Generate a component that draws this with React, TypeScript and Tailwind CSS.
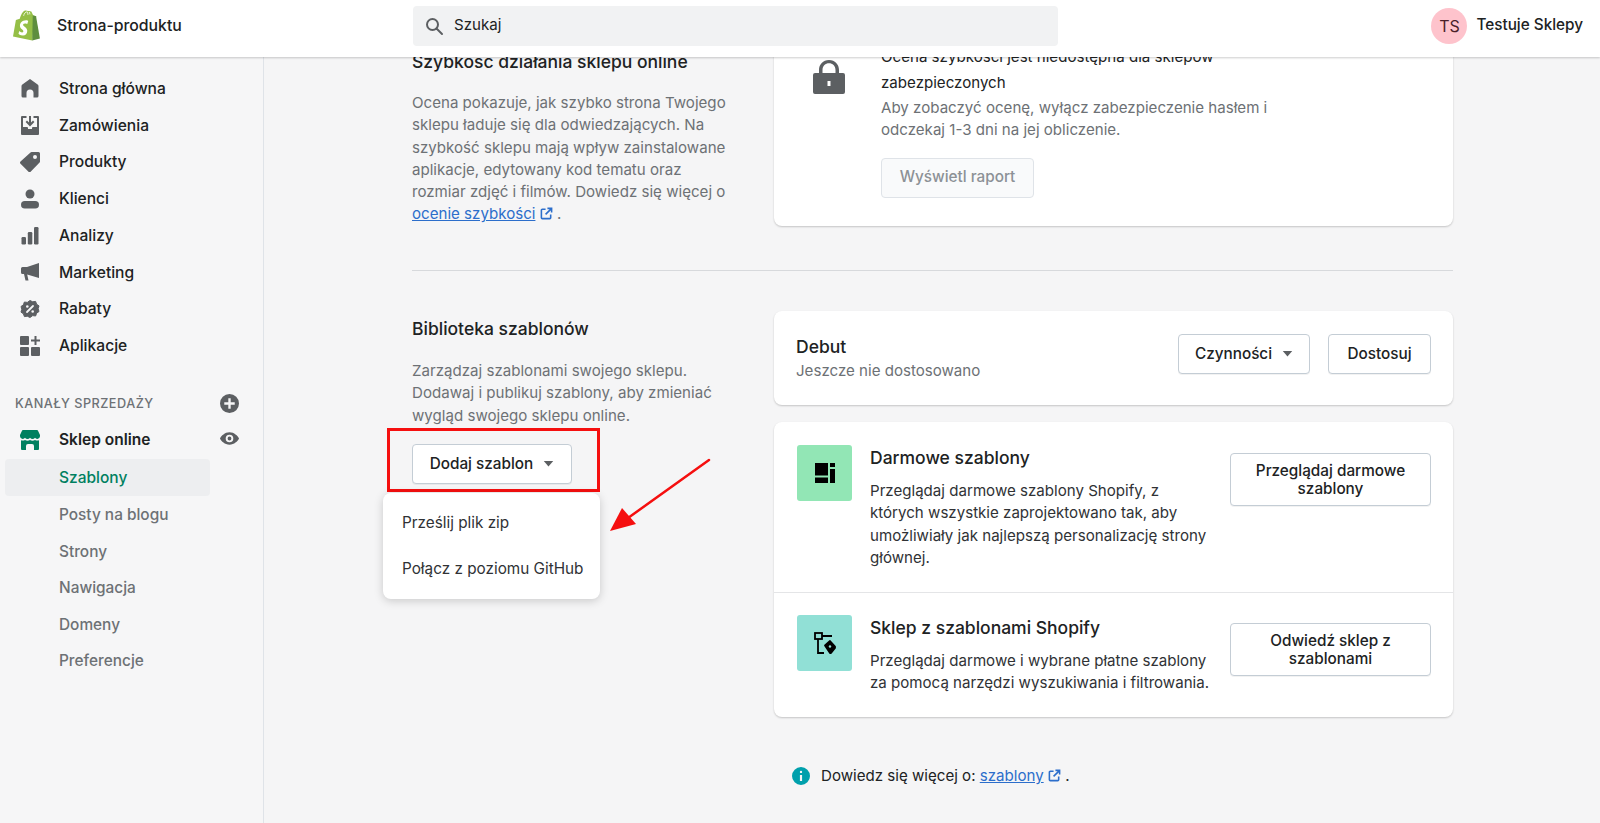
import React from "react";

const navItems = [
  { label: "Strona główna", icon: <HomeIcon /> },
  { label: "Zamówienia", icon: <OrdersIcon /> },
  { label: "Produkty", icon: <TagIcon /> },
  { label: "Klienci", icon: <CustomerIcon /> },
  { label: "Analizy", icon: <AnalyticsIcon /> },
  { label: "Marketing", icon: <MarketingIcon /> },
  { label: "Rabaty", icon: <DiscountIcon /> },
  { label: "Aplikacje", icon: <AppsIcon /> },
];

const subItems = ["Posty na blogu", "Strony", "Nawigacja", "Domeny", "Preferencje"];

function HomeIcon() {
  return (
    <svg viewBox="0 0 20 20" className="w-5 h-5" fill="#5c5f62">
      <path d="M10 1 2.700 6.200A2 2 0 0 0 1.500 8v10A1.500 1.500 0 0 0 3 19.500h3.500V15a3.500 3.500 0 0 1 7 0v4.500H17a1.500 1.500 0 0 0 1.500-1.500V8a2 2 0 0 0-1.200-1.800z" />
    </svg>
  );
}

function OrdersIcon() {
  return (
    <svg viewBox="0 0 20 20" className="w-5 h-5" fill="#5c5f62">
      <path d="M1 2a1 1 0 0 1 1-1h4.500v2H3v9h4a1 1 0 0 1 1 1v1h4v-1a1 1 0 0 1 1-1h4V3h-3.500V1H18a1 1 0 0 1 1 1v17a1 1 0 0 1-1 1H2a1 1 0 0 1-1-1z" />
      <path d="M9 1h2v6.600l2-2 1.400 1.400-4.400 4.400L5.600 7 7 5.600l2 2z" />
    </svg>
  );
}

function TagIcon() {
  return (
    <svg viewBox="0 0 20 20" className="w-5 h-5" fill="#5c5f62">
      <path
        fillRule="evenodd"
        d="M18.500 0h-7a1.500 1.500 0 0 0-1 .4L.5 9.600a1.500 1.500 0 0 0 0 2.100l8 8a1.500 1.500 0 0 0 2.100 0l9-9.300a1.500 1.500 0 0 0 .4-1V1.500A1.500 1.500 0 0 0 18.500 0zM15 7a2 2 0 1 1 0-4 2 2 0 0 1 0 4z"
      />
    </svg>
  );
}

function CustomerIcon() {
  return (
    <svg viewBox="0 0 20 20" className="w-5 h-5" fill="#5c5f62">
      <circle cx="10" cy="5" r="4.500" />
      <rect x="1" y="12" width="18" height="7.500" rx="3.750" />
    </svg>
  );
}

function AnalyticsIcon() {
  return (
    <svg viewBox="0 0 20 20" className="w-5 h-5" fill="#5c5f62">
      <rect x="1.500" y="11" width="4.500" height="7.500" rx="1.200" />
      <rect x="7.800" y="6" width="4.500" height="12.500" rx="1.200" />
      <rect x="14" y="1" width="4.500" height="17.500" rx="1.200" />
    </svg>
  );
}

function MarketingIcon() {
  return (
    <svg viewBox="0 0 20 20" className="w-5 h-5" fill="#5c5f62">
      <path d="M19 1 7 5H2.500A1.500 1.500 0 0 0 1 6.500v4A1.500 1.500 0 0 0 2.500 12H4l1.500 6.500h3L7.200 12.500 19 16z" />
    </svg>
  );
}

function DiscountIcon() {
  return (
    <svg viewBox="0 0 20 20" className="w-[22px] h-[22px]">
      <path
        d="M10 1.500l2.700 1.300 2.900-.4 1 2.800 2.400 1.700-.8 2.800.8 2.800-2.400 1.700-1 2.800-2.900-.4L10 18.500l-2.700-1.300-2.900.4-1-2.800L1 13.100l.8-2.800L1 7.500l2.400-1.700 1-2.800 2.900.4z"
        fill="#5c5f62"
        stroke="#5c5f62"
        strokeWidth="1"
        strokeLinejoin="round"
      />
      <path d="M7 13l6-6" stroke="#f6f6f7" strokeWidth="1.800" strokeLinecap="round" />
      <circle cx="7.300" cy="7.500" r="1.300" fill="#f6f6f7" />
      <circle cx="12.700" cy="12.500" r="1.300" fill="#f6f6f7" />
    </svg>
  );
}

function AppsIcon() {
  return (
    <svg viewBox="0 0 20 20" className="w-5 h-5" fill="#5c5f62">
      <rect x="0" y="0" width="9" height="9" rx="1" />
      <rect x="0" y="11" width="9" height="9" rx="1" />
      <rect x="11" y="11" width="9" height="9" rx="1" />
      <path d="M14.500 0h2v3.500H20v2h-3.500V9h-2V5.500H11v-2h3.500z" />
    </svg>
  );
}

function StoreIcon() {
  return (
    <svg viewBox="0 0 20 20" className="w-5 h-5" fill="#008060">
      <path d="M3 0h14a1 1 0 0 1 .9.500L20 5v1.200a2.800 2.800 0 0 1-5 1.600 3.200 3.200 0 0 1-5 0 3.200 3.200 0 0 1-5 0 2.800 2.800 0 0 1-5-1.600V5L2.100.5A1 1 0 0 1 3 0z" />
      <path d="M1 10.300a4.500 4.500 0 0 0 4-.4 4.800 4.800 0 0 0 5 0 4.800 4.800 0 0 0 5 0 4.500 4.500 0 0 0 4 .4V19a1 1 0 0 1-1 1h-4v-4a2 2 0 0 0-2-2H8a2 2 0 0 0-2 2v4H2a1 1 0 0 1-1-1z" />
    </svg>
  );
}

function PlusCircle() {
  return (
    <svg viewBox="0 0 20 20" className="w-[19px] h-[19px]" fill="#5c5f62">
      <path
        fillRule="evenodd"
        d="M10 0a10 10 0 1 0 0 20 10 10 0 0 0 0-20zm1.250 4.500v4.250h4.250v2.500h-4.250v4.250h-2.500v-4.250H4.500v-2.500h4.250V4.500z"
      />
    </svg>
  );
}

function EyeIcon() {
  return (
    <svg viewBox="0 0 20 20" className="w-[19px] h-[19px]" fill="#5c5f62">
      <path
        fillRule="evenodd"
        d="M10 3.500C5 3.500 1.300 7.500.2 9.500a1 1 0 0 0 0 1C1.300 12.500 5 16.500 10 16.500s8.700-4 9.800-6a1 1 0 0 0 0-1C18.700 7.500 15 3.500 10 3.500zm0 10.500a4 4 0 1 1 0-8 4 4 0 0 1 0 8zm0-2a2 2 0 1 0 0-4 2 2 0 0 0 0 4z"
      />
    </svg>
  );
}

function ExternalIcon() {
  return (
    <svg viewBox="0 0 14 14" className="inline-block w-[13px] h-[13px] align-[-1px]" fill="none" stroke="#2c6ecb" strokeWidth="1.700">
      <path d="M6 2.500H2.500a1 1 0 0 0-1 1v8a1 1 0 0 0 1 1h8a1 1 0 0 0 1-1V8" />
      <path d="M6 8l6-6M8 1.500h4.500V6" />
    </svg>
  );
}

function Caret() {
  return (
    <svg viewBox="0 0 12 7" className="w-[11px] h-[6px]" fill="#5c5f62">
      <path d="M.5 0h11L6 6.500z" />
    </svg>
  );
}

function ShopifyLogo() {
  return (
    <svg viewBox="0 0 28 32" className="w-[27px] h-[31px]">
      <path d="M24.500 6.500 21 5.500 19 1.500c-1-.6-2.500-.8-3.500-.5C14 0 12 0 10.500 1.700 8.500 4 7.500 7 7 9L3 10.300 0 27.500 20 31.500 22 8z" fill="#95bf47" />
      <path d="M20.500 5.300 19.900 31.500l8-2-4-23.200z" fill="#5e8e3e" />
      <path
        d="M15.800 11.300l-1 3.100s-1.100-.5-2.300-.5c-1.900 0-2 1.200-2 1.500 0 1.600 4.300 2.300 4.300 6.100 0 3-1.900 4.900-4.500 4.900-3 0-4.600-1.900-4.600-1.900l.8-2.700s1.600 1.400 3 1.400c.9 0 1.200-.7 1.200-1.200 0-2.100-3.500-2.200-3.500-5.700 0-2.900 2.100-5.800 6.400-5.800 1.600 0 2.400.8 2.400.8z"
        fill="#fff"
      />
      <path d="M11 6c.5-2.500 2-4 3.500-4.200M15.500 5c0-1.500-.2-2.700-.7-3.300M17.500 4.500c0-1-.2-2-.7-2.500" fill="none" stroke="#fff" strokeWidth=".8" />
    </svg>
  );
}

function Button({ children, className }: { children: React.ReactNode; className: string }) {
  return (
    <button className={`bg-white border border-[#c4cdd5] rounded-[4px] text-[#202223] text-[15.300px] shadow-[0_1px_0_rgba(0,0,0,0.05)] flex items-center justify-center text-center leading-[18px] ${className}`}>
      {children}
    </button>
  );
}

export default function App() {
  return (
    <div
      className="h-screen flex flex-col overflow-hidden bg-[#f5f5f6] text-[#202223] text-[15.100px]"
      style={{ fontFamily: "Inter, 'Liberation Sans', sans-serif" }}
    >
      <header className="relative z-10 h-[57px] shrink-0 bg-white shadow-[0_1px_2px_rgba(0,0,0,0.2)] flex items-center pb-[6px]">
        <div className="w-[413px] shrink-0 flex items-center pl-[13px]">
          <ShopifyLogo />
          <span className="ml-[17px] font-medium text-[15.800px]">Strona-produktu</span>
        </div>
        <div className="w-[645px] h-10 rounded-[4px] bg-[#f1f2f3] flex items-center pl-[11px] gap-[10px]">
          <svg viewBox="0 0 20 20" className="w-5 h-5" fill="none" stroke="#5c5f62" strokeWidth="2">
            <circle cx="8.500" cy="8.500" r="5.500" />
            <path d="M12.500 12.500 18 18" strokeLinecap="round" />
          </svg>
          <span>Szukaj</span>
        </div>
        <div className="ml-auto flex items-center pr-[17px]">
          <div className="w-9 h-9 rounded-full bg-[#fec3cc] text-[#4a1f29] flex items-center justify-center text-[16px]">TS</div>
          <span className="ml-[9px] font-medium text-[15.300px]">Testuje Sklepy</span>
        </div>
      </header>

      <div className="flex-1 flex min-h-0">
        <aside className="w-[264px] shrink-0 bg-[#f6f6f7] border-r border-[#dfe3e8] pt-[13px] pl-[5px] pr-[53px]">
          {navItems.map((item) => (
            <div key={item.label} className="h-[36.800px] flex items-center font-medium text-[15.600px] text-[#202223]">
              <span className="w-5 ml-[15px] flex items-center justify-center">{item.icon}</span>
              <span className="ml-[19px]">{item.label}</span>
            </div>
          ))}

          <div className="relative mt-[21px] h-[36px] flex items-center pl-[10px] text-[12.700px] tracking-[0.5px] font-medium text-[#6d7175] w-[258px]">
            KANAŁY SPRZEDAŻY
            <span className="absolute left-[215px] top-[9px]">
              <PlusCircle />
            </span>
          </div>
          <div className="relative h-[37px] flex items-center font-semibold text-[15.500px] text-[#202223] w-[258px]">
            <span className="w-5 ml-[15px] flex items-center justify-center">
              <StoreIcon />
            </span>
            <span className="ml-[19px]">Sklep online</span>
            <span className="absolute left-[215px] top-[8px]">
              <EyeIcon />
            </span>
          </div>
          <div className="mt-[1px] h-[37px] rounded-[4px] bg-[#edeef0] flex items-center pl-[54px] font-medium text-[15.500px] text-[#008060]">Szablony</div>
          {subItems.map((label) => (
            <div key={label} className="h-[36.600px] flex items-center pl-[54px] font-medium text-[15.400px] text-[#6d7175] whitespace-nowrap">
              {label}
            </div>
          ))}
        </aside>

        <main className="flex-1 min-w-0 pl-[148px] pr-[147px]">
          <div className="-mt-[30px]">
            <section className="grid grid-cols-[325px_679px] gap-x-[37px] h-[189px]">
              <div className="pt-[24px]">
                <h2 className="font-medium text-[17.500px] leading-[22px] whitespace-nowrap">Szybkość działania sklepu online</h2>
                <p className="mt-[19px] leading-[22.300px] text-[#6d7175]">
                  Ocena pokazuje, jak szybko strona Twojego sklepu ładuje się dla odwiedzających. Na szybkość sklepu mają wpływ zainstalowane aplikacje, edytowany kod tematu oraz rozmiar zdjęć i filmów. Dowiedz się więcej o{" "}
                  <span className="text-[#2c6ecb] underline">ocenie szybkości</span> <ExternalIcon /> .
                </p>
              </div>
              <div className="bg-white rounded-[8px] shadow-[0_1px_2px_rgba(0,0,0,0.2)] flex pl-[39px]">
                <svg viewBox="0 0 32 34" className="mt-[33px] w-[32px] h-[34px] shrink-0" fill="#5c5f62">
                  <path fillRule="evenodd" d="M16 0C10 0 6 4.500 6 10v3H2a2 2 0 0 0-2 2v17a2 2 0 0 0 2 2h28a2 2 0 0 0 2-2V15a2 2 0 0 0-2-2h-4v-3C26 4.500 22 0 16 0zm-6.500 13v-3c0-4 3-6.700 6.500-6.700s6.500 2.700 6.500 6.700v3zM14.500 21h3v5h-3z" />
                </svg>
                <div className="ml-[36px] pt-[17px] w-[410px]">
                  <p className="leading-[26px] font-normal text-[#202223]">Ocena szybkości jest niedostępna dla sklepów zabezpieczonych</p>
                  <p className="leading-[22.300px] text-[#6d7175] mt-[1px]">Aby zobaczyć ocenę, wyłącz zabezpieczenie hasłem i odczekaj 1-3 dni na jej obliczenie.</p>
                  <button className="mt-[16px] w-[153px] h-10 rounded-[4px] border border-[#dfe3e8] bg-[#f9fafb] font-medium text-[15.300px] text-[#8c9196]">Wyświetl raport</button>
                </div>
              </div>
            </section>

            <hr className="mt-[54px] border-t border-[#d7d9dc]" />

            <section className="grid grid-cols-[325px_679px] gap-x-[37px] mt-[40px]">
              <div className="relative">
                <h2 className="mt-[7px] font-medium text-[17.500px] leading-[22px]">Biblioteka szablonów</h2>
                <p className="mt-[20px] leading-[22.300px] text-[#6d7175]">
                  Zarządzaj szablonami swojego sklepu. Dodawaj i publikuj szablony, aby zmieniać wygląd swojego sklepu online.
                </p>
                <Button className="mt-[17px] w-[160px] h-10 gap-[10px] font-medium">
                  Dodaj szablon <Caret />
                </Button>

                <div className="absolute left-[-25px] top-[117px] w-[213px] h-[64px] border-[3px] border-[#f50f0f]" />
                <div className="absolute left-[-29px] top-[182px] w-[217px] h-[106px] rounded-[8px] bg-white shadow-[0_2px_10px_rgba(0,0,0,0.18)] pl-[19px] text-[15.300px] text-[#303235]">
                  <div className="h-[46px] mt-[7px] flex items-center">Prześlij plik zip</div>
                  <div className="h-[46px] flex items-center whitespace-nowrap">Połącz z poziomu GitHub</div>
                </div>
                <svg viewBox="0 0 110 80" className="absolute left-[194px] top-[147px] w-[110px] h-[80px]">
                  <path d="M103 2 22 60" stroke="#f50f0f" strokeWidth="2.500" strokeLinecap="round" />
                  <path d="M4 73 16 50 30 66z" fill="#f50f0f" />
                </svg>
              </div>

              <div>
                <div className="h-[94px] bg-white rounded-[8px] shadow-[0_1px_2px_rgba(0,0,0,0.2)] flex items-center pl-[22px] pr-[22px]">
                  <div className="flex-1">
                    <div className="font-medium text-[17.500px] leading-[24px]">Debut</div>
                    <div className="text-[#6d7175] leading-[22px] mt-[1px]">Jeszcze nie dostosowano</div>
                  </div>
                  <Button className="mb-[9px] w-[132px] h-10 gap-[10px] font-medium">
                    Czynności <Caret />
                  </Button>
                  <Button className="mb-[9px] ml-[18px] w-[103px] h-10 font-medium">Dostosuj</Button>
                </div>

                <div className="mt-[17px] bg-white rounded-[8px] shadow-[0_1px_2px_rgba(0,0,0,0.2)]">
                  <div className="h-[170px] flex pl-[23px] pr-[22px] pt-[23px]">
                    <div className="w-[55px] h-[56px] shrink-0 rounded-[3px] bg-[#92e6b5] flex items-center justify-center">
                      <svg viewBox="0 0 20 20" className="w-5 h-5" fill="#000">
                        <path d="M0 0h13v12.500H0zM15 0h5v4h-5zM15 6h5v14h-5zM0 14.500h13V20H0z" />
                      </svg>
                    </div>
                    <div className="ml-[18px] w-[345px]">
                      <div className="font-medium text-[17.500px] leading-[24px] mt-[1px]">Darmowe szablony</div>
                      <p className="mt-[10px] leading-[22.300px] text-[#303235]">
                        Przeglądaj darmowe szablony Shopify, z których wszystkie zaprojektowano tak, aby umożliwiały jak najlepszą personalizację strony głównej.
                      </p>
                    </div>
                    <Button className="ml-auto mt-[8px] w-[201px] h-[53px] font-medium px-4">Przeglądaj darmowe szablony</Button>
                  </div>
                  <div className="h-[125px] border-t border-[#e4e5e7] flex pl-[23px] pr-[22px] pt-[22px]">
                    <div className="w-[55px] h-[56px] shrink-0 rounded-[3px] bg-[#91e0d6] flex items-center justify-center">
                      <svg viewBox="0 0 24 24" className="w-[24px] h-[24px]" fill="none" stroke="#000" strokeWidth="1.800">
                        <rect x="2" y="2" width="7" height="6" />
                        <path d="M9 5h10M5 8v14h6" />
                        <path d="M12 14.500l5-4.500 5 5.500V17l-4 5h-1z" fill="#000" strokeLinejoin="round" />
                        <circle cx="17" cy="15.500" r="1.200" fill="#91e0d6" stroke="none" />
                      </svg>
                    </div>
                    <div className="ml-[18px] w-[345px]">
                      <div className="font-medium text-[17.500px] leading-[24px] mt-[1px]">Sklep z szablonami Shopify</div>
                      <p className="mt-[10px] leading-[22.300px] text-[#303235]">
                        Przeglądaj darmowe i wybrane płatne szablony za pomocą narzędzi wyszukiwania i filtrowania.
                      </p>
                    </div>
                    <Button className="ml-auto mt-[8px] w-[201px] h-[53px] font-medium px-6">Odwiedź sklep z szablonami</Button>
                  </div>
                </div>

                <div className="mt-[48px] flex items-center pl-[18px]">
                  <svg viewBox="0 0 20 20" className="w-[18px] h-[18px]" fill="#00a0ac">
                    <path fillRule="evenodd" d="M10 0a10 10 0 1 0 0 20 10 10 0 0 0 0-20zM8.700 5.500a1.300 1.300 0 1 1 2.600 0 1.300 1.300 0 0 1-2.600 0zM8.800 9h2.400v6.500H8.800z" />
                  </svg>
                  <span className="ml-[11px]">
                    Dowiedz się więcej o: <span className="text-[#2c6ecb] underline">szablony</span> <ExternalIcon /> .
                  </span>
                </div>
              </div>
            </section>
          </div>
        </main>
      </div>
    </div>
  );
}
